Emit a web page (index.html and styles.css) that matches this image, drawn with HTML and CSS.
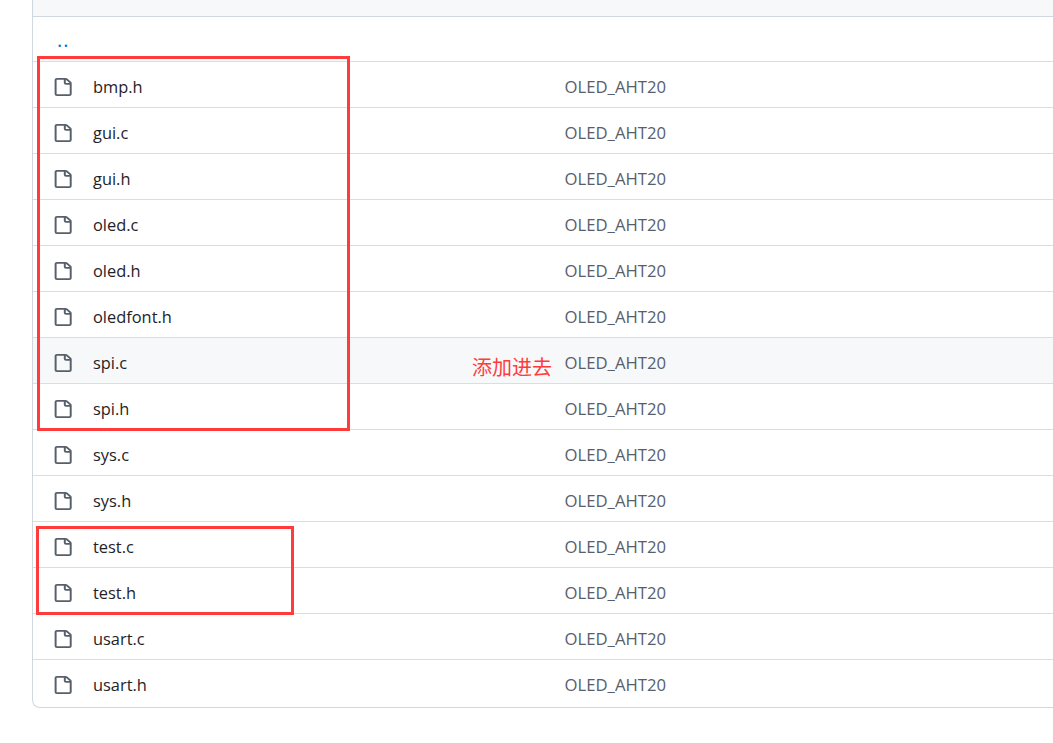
FILE: index.html
```html
<!DOCTYPE html>
<html>
<head>
    <meta charset="utf-8">
    <title>OLED_AHT20</title>
    <link rel="stylesheet" href="styles.css">
</head>
<body>
    <svg class="defs" width="0" height="0">
        <symbol id="file-icon" viewBox="0 0 16 16" preserveAspectRatio="none">
            <path d="M2 1.75C2 .784 2.784 0 3.75 0h6.586c.464 0 .909.184 1.237.513l2.914 2.914c.329.328.513.773.513 1.237v9.586A1.75 1.75 0 0 1 13.25 16h-9.5A1.75 1.75 0 0 1 2 14.25Zm1.75-.25a.25.25 0 0 0-.25.25v12.5c0 .138.112.25.25.25h9.5a.25.25 0 0 0 .25-.25V6h-2.75A1.75 1.75 0 0 1 9 4.25V1.5Zm6.75.062V4.25c0 .138.112.25.25.25h2.688l-.011-.013-2.914-2.914-.013-.011Z"></path>
        </symbol>
    </svg>
    <div class="filelist">
        <div class="head"></div>
        <div class="row up"><a class="uplink">..</a></div>
        <div class="row"><svg class="icon"><use href="#file-icon"></use></svg><span class="name">bmp.h</span><span class="commit">OLED_AHT20</span></div>
        <div class="row"><svg class="icon"><use href="#file-icon"></use></svg><span class="name">gui.c</span><span class="commit">OLED_AHT20</span></div>
        <div class="row"><svg class="icon"><use href="#file-icon"></use></svg><span class="name">gui.h</span><span class="commit">OLED_AHT20</span></div>
        <div class="row"><svg class="icon"><use href="#file-icon"></use></svg><span class="name">oled.c</span><span class="commit">OLED_AHT20</span></div>
        <div class="row"><svg class="icon"><use href="#file-icon"></use></svg><span class="name">oled.h</span><span class="commit">OLED_AHT20</span></div>
        <div class="row"><svg class="icon"><use href="#file-icon"></use></svg><span class="name">oledfont.h</span><span class="commit">OLED_AHT20</span></div>
        <div class="row hover"><svg class="icon"><use href="#file-icon"></use></svg><span class="name">spi.c</span><span class="commit">OLED_AHT20</span></div>
        <div class="row"><svg class="icon"><use href="#file-icon"></use></svg><span class="name">spi.h</span><span class="commit">OLED_AHT20</span></div>
        <div class="row"><svg class="icon"><use href="#file-icon"></use></svg><span class="name">sys.c</span><span class="commit">OLED_AHT20</span></div>
        <div class="row"><svg class="icon"><use href="#file-icon"></use></svg><span class="name">sys.h</span><span class="commit">OLED_AHT20</span></div>
        <div class="row"><svg class="icon"><use href="#file-icon"></use></svg><span class="name">test.c</span><span class="commit">OLED_AHT20</span></div>
        <div class="row"><svg class="icon"><use href="#file-icon"></use></svg><span class="name">test.h</span><span class="commit">OLED_AHT20</span></div>
        <div class="row"><svg class="icon"><use href="#file-icon"></use></svg><span class="name">usart.c</span><span class="commit">OLED_AHT20</span></div>
        <div class="row last"><svg class="icon"><use href="#file-icon"></use></svg><span class="name">usart.h</span><span class="commit">OLED_AHT20</span></div>
    </div>

    <!-- annotations drawn on top of the screenshot -->
    <div class="mark mark-top"></div>
    <div class="mark mark-bottom"></div>
    <div class="note">添加进去</div>
</body>
</html>
```

FILE: styles.css
```css
html, body {
    margin: 0;
    padding: 0;
}

body {
    position: relative;
    height: 743px;
    overflow: hidden;
    background: #fff;
    font-family: "Open Sans", "Noto Sans", sans-serif;
    font-size: 16.4px;
}

.defs {
    position: absolute;
}

/*file table*/
.filelist {
    margin-left: 32px;
    border-left: 1px solid #d0d7de;
    border-bottom: 1px solid #d0d7de;
    border-bottom-left-radius: 8px;
}

.head {
    height: 16px;
    background: #f6f8fa;
    border-bottom: 1px solid #d0d7de;
}

.row {
    display: grid;
    grid-template-columns: 60px 471.5px 1fr;
    align-items: center;
    height: 41px;
    padding-top: 4px;
    border-bottom: 1px solid #d8dee4;
}

.row.up {
    height: 44px;
    padding-top: 0;
    display: block;
}

.row.last {
    height: 41px;
    padding-bottom: 2px;
    border-bottom: 0;
}

.row.hover {
    background: #f6f8fa;
}

.uplink {
    display: block;
    padding: 1px 0 0 24px;
    color: #0969da;
    font-size: 20px;
    letter-spacing: 1px;
    line-height: 43px;
}

.icon {
    width: 21px;
    height: 18px;
    margin-left: 19px;
    fill: #57606a;
}

.name {
    color: #1f2328;
}

.commit {
    color: #57606a;
    font-size: 16.7px;
}

/*red marks*/
.mark {
    position: absolute;
    box-sizing: border-box;
    border: 3px solid #ff3b3b;
}

.mark-top {
    left: 37px;
    top: 56px;
    width: 313px;
    height: 375px;
}

.mark-bottom {
    left: 36px;
    top: 526px;
    width: 258px;
    height: 89px;
}

.note {
    position: absolute;
    left: 472px;
    top: 353px;
    color: #ff3b3b;
    font-family: "Noto Sans CJK SC", sans-serif;
    font-size: 20px;
    line-height: 28px;
}
```
